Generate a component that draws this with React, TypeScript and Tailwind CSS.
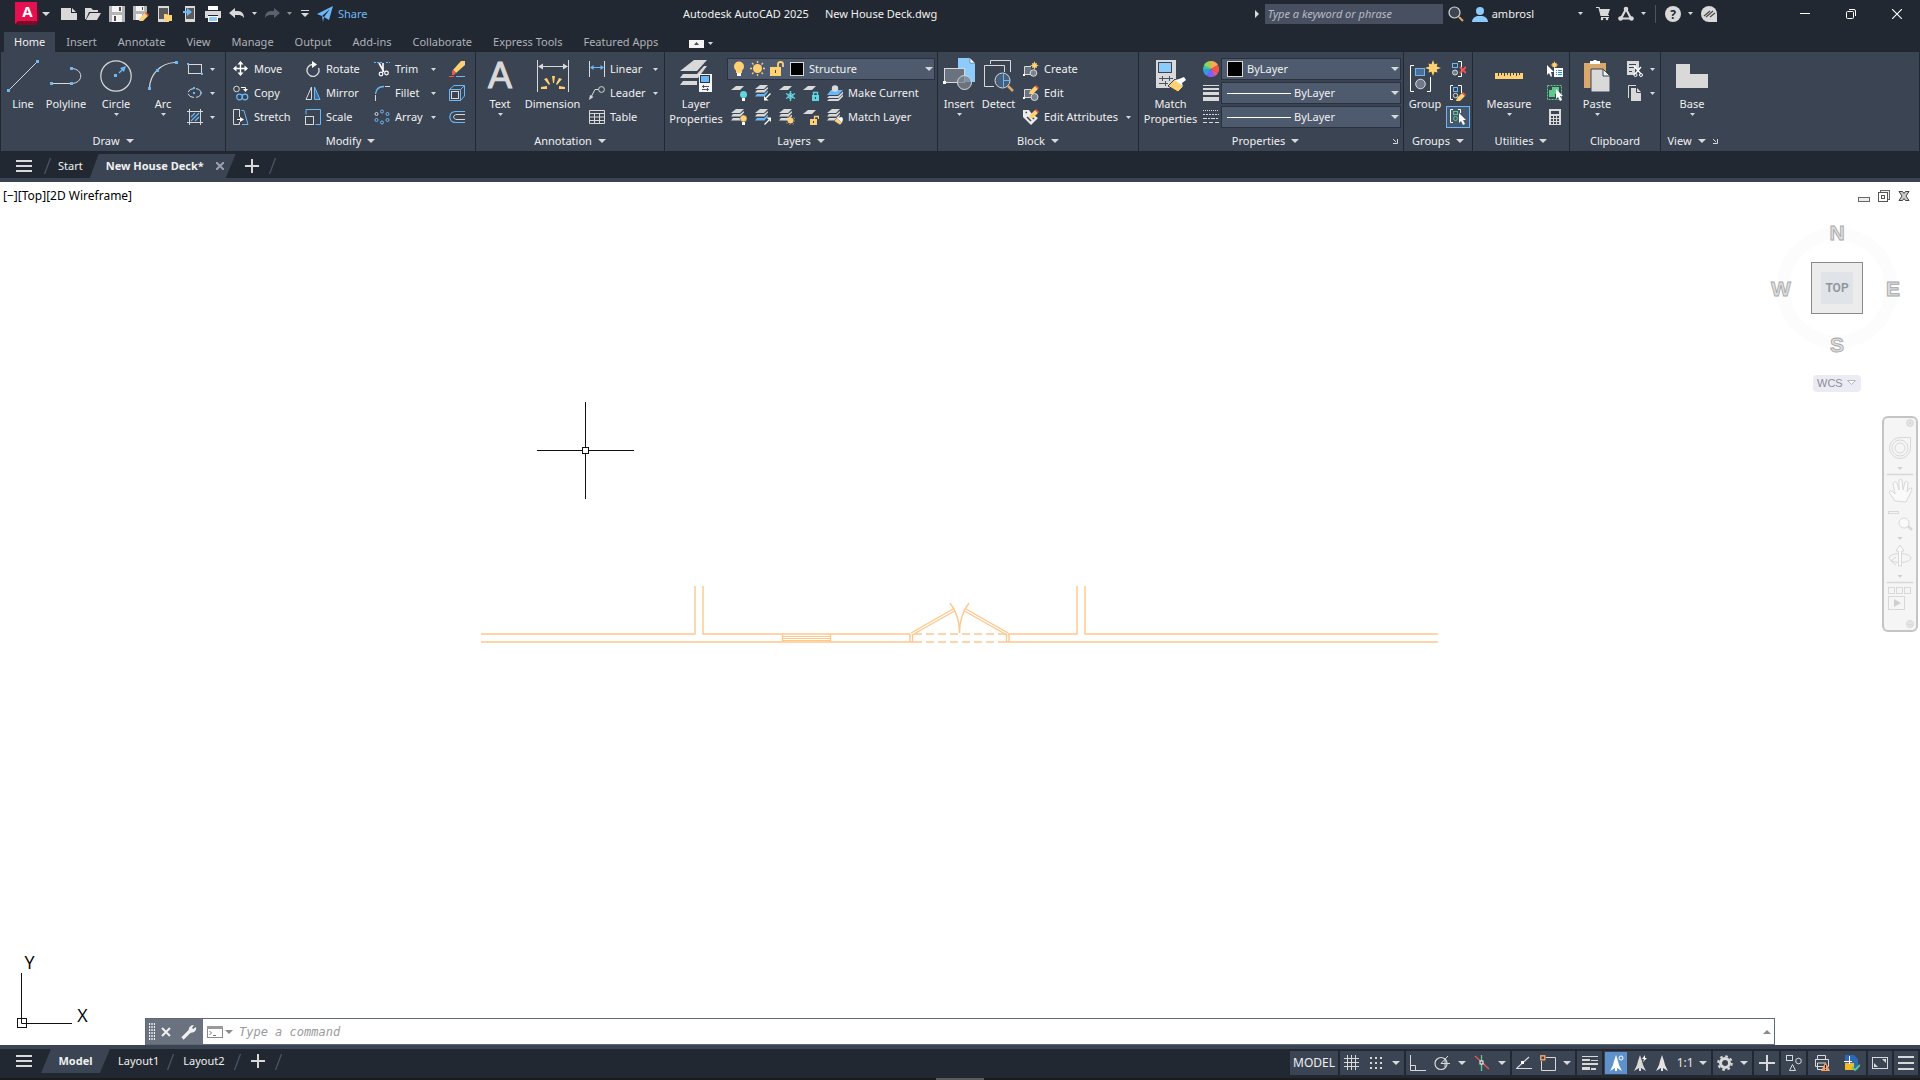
import React, { useState } from 'react';
import clsx from 'clsx';

const LIGHT = '#d9d9d9';
const BLUE = '#6cb8f6';
const YELLOW = '#ffd173';
const WOOD = '#d9a86c';
const TEAL = '#62d6e0';
const GREEN = '#5ec98a';
const RED = '#f25555';
const PANEL = '#3b4453';

type IconProps = { size?: number; w?: number; h?: number; className?: string; children: React.ReactNode };

function Svg({ size = 16, w, h, className, children }: IconProps) {
  const width = w ?? size;
  const height = h ?? size;
  return (
    <svg
      width={width}
      height={height}
      viewBox={`0 0 ${width} ${height}`}
      fill="none"
      className={clsx('shrink-0', className)}
      aria-hidden="true"
    >
      {children}
    </svg>
  );
}

function Caret({ size = 'sm', className }: { size?: 'sm' | 'md'; className?: string }) {
  const w = size === 'sm' ? 5 : 8;
  const h = size === 'sm' ? 3 : 4;
  return (
    <Svg w={w} h={h} className={className}>
      <path d={`M0 0H${w}L${w / 2} ${h}Z`} fill={LIGHT} />
    </Svg>
  );
}

/* ---------- shared icon parts ---------- */

const Dot = ({ x, y }: { x: number; y: number }) => <rect x={x} y={y} width="3" height="3" fill={BLUE} />;

const Pencil = ({ x, y }: { x: number; y: number }) => (
  <g transform={`translate(${x} ${y})`}>
    <path d="M0 9L1 6L6 1L9 4L4 9Z" fill={YELLOW} />
    <path d="M6 1L7 0L10 3L9 4Z" fill={RED} />
  </g>
);

const Star = ({ x, y, r }: { x: number; y: number; r: number }) => {
  const pts = Array.from({ length: 16 }, (_, i) => {
    const rad = i % 2 ? r * 0.5 : i % 4 ? r * 0.8 : r;
    const a = (i * Math.PI) / 8;
    return `${x + rad * Math.sin(a)},${y - rad * Math.cos(a)}`;
  });
  return <polygon points={pts.join(' ')} fill={YELLOW} />;
};

const Pointer = ({ x, y }: { x: number; y: number }) => (
  <path transform={`translate(${x} ${y})`} d="M0 0V10L2 8L4 12L6 11L4 7H7Z" fill="#ffffff" />
);

const Sheet = ({ y, fill = LIGHT }: { y: number; fill?: string }) => <path d={`M5 ${y}H13L9 ${y + 4}H0Z`} fill={fill} />;

const Sheets = ({ accent = LIGHT }: { accent?: string }) => (
  <>
    <Sheet y={0} />
    <path d="M2 5H9L13 2V3.500L9.500 7.500H0Z" fill={LIGHT} />
    <path d="M2 9H9L13 5.500V7L9.500 11.500H0Z" fill={accent} />
  </>
);

/* ---------- ribbon icons, 32px ---------- */

const big = {
  line: (
    <Svg size={32}>
      <path d="M2 30L30 2" stroke={LIGHT} />
      <Dot x={0} y={29} />
      <Dot x={29} y={0} />
    </Svg>
  ),
  polyline: (
    <Svg size={32}>
      <path d="M1 23.5H21M21 8.5C34 8.5 34 23.5 21 23.5" stroke={LIGHT} />
      <Dot x={0} y={22} />
      <Dot x={20} y={22} />
      <Dot x={20} y={7} />
    </Svg>
  ),
  circle: (
    <Svg size={32}>
      <circle cx="16" cy="16" r="15.2" stroke={LIGHT} strokeWidth="1.2" />
      <path d="M19 13L24 8" stroke={BLUE} strokeWidth="1.4" />
      <path d="M26 6L20 8L24 12Z" fill={BLUE} />
      <Dot x={14} y={14} />
    </Svg>
  ),
  arc: (
    <Svg size={32}>
      <path d="M2.500 28C3 14 14 3 28 2.500" stroke={LIGHT} strokeWidth="1.2" />
      <Dot x={1} y={27} />
      <Dot x={9} y={9} />
      <Dot x={28} y={1} />
    </Svg>
  ),
  text: (
    <Svg size={32} className="overflow-visible">
      <text x="16" y="28" textAnchor="middle" fontSize="36" fontFamily="Liberation Sans, Arial, sans-serif" fill={LIGHT} stroke={LIGHT}>A</text>
    </Svg>
  ),
  dimension: (
    <Svg size={32}>
      <path d="M.5 0V32M31.500 0V32M2 6.500H30" stroke={LIGHT} />
      <path d="M1 6.500L6 3.500V9.500ZM31 6.500L26 3.500V9.500Z" fill={LIGHT} />
      <path d="M15 16H18L17 23H16ZM7 19L10 18L13 24L12 25ZM25 19L22 18L19 24L20 25ZM4 27L10 26V29H4ZM28 27L22 26V29H28Z" fill={YELLOW} />
    </Svg>
  ),
  layerProps: (
    <Svg size={32}>
      <path d="M14 0H27L17 11H0Z" fill={LIGHT} />
      <path d="M3 14H17L24 6H27L18 18H0Z" fill={LIGHT} />
      <path d="M3 21H17V25H0Z" fill={LIGHT} />
      <rect x="19" y="14" width="13" height="18" fill="#f4f4f4" />
      <rect x="20.500" y="15.500" width="9" height="7" fill={BLUE} stroke="#2b3340" />
      <path d="M22 26.500H29M22 29.500H29M23.500 25V28M27.500 28V31" stroke="#4a5362" />
    </Svg>
  ),
  insert: (
    <Svg size={32} className="overflow-visible">
      <path d="M15 -2H27L32 3V22H15Z" fill="#8ccbfb" />
      <path d="M27 -2L32 3H27Z" fill="#fff" stroke={PANEL} strokeWidth=".5" />
      <rect x="1.500" y="8.500" width="20" height="14" fill="#6a7280" stroke={LIGHT} />
      <circle cx="21.500" cy="22.500" r="7" fill="#7b828f" fillOpacity=".75" stroke={LIGHT} />
      <rect x="0" y="21" width="3" height="3" fill="#fff" />
    </Svg>
  ),
  detect: (
    <Svg size={32}>
      <path d="M7.500 4V.5H27.500V12M1.500 26.500V5.500H21.500V12M1.500 26.500H11" stroke={LIGHT} />
      <circle cx="19.500" cy="20.500" r="7.500" fill="#46607c" stroke={LIGHT} />
      <path d="M20.500 13V28M20.500 20.500H27" stroke={BLUE} />
      <path d="M25 26L30 31" stroke={WOOD} strokeWidth="2.5" />
    </Svg>
  ),
  matchProps: (
    <Svg size={32}>
      <rect x="1" y="0" width="20" height="28" fill={LIGHT} />
      <rect x="3.500" y="2.500" width="13" height="10" fill="#8ccbfb" stroke="#3b4453" />
      <path d="M4 18.500H18M4 23.500H13M7.500 16V21M10.500 21V26M14.500 16V21" stroke="#4a5362" />
      <path d="M13 26L20 19L28 27L23 32Z" fill={YELLOW} stroke={PANEL} />
      <path d="M20 20L24 19L29 17L31 20L27 23L28 27Z" fill="#fff" />
    </Svg>
  ),
  group: (
    <Svg size={32}>
      <path d="M5 5.500H1.500V31.500H5M18 31.500H21.500V17" stroke="#fff" />
      <rect x="6.500" y="8.500" width="9" height="7" fill="#4c6f93" stroke={BLUE} />
      <circle cx="11.500" cy="24" r="4.800" fill="#70798a" stroke={LIGHT} />
      <Star x={24} y={8} r={8} />
    </Svg>
  ),
  measure: (
    <Svg size={32}>
      <rect x="2" y="13" width="28" height="6" fill={YELLOW} />
      <path d="M5.500 13V16M8.500 13V15M11.500 13V16M14.500 13V15M17.500 13V16M20.500 13V15M23.500 13V16M26.500 13V15" stroke={PANEL} />
    </Svg>
  ),
  paste: (
    <Svg size={32}>
      <rect x="3" y="3" width="22" height="25" fill={WOOD} />
      <path d="M9 1H12L13 0H15L16 1H19V4H9Z" fill="#fff" />
      <path d="M10 9H22L29 16V32H10Z" fill={LIGHT} stroke={PANEL} />
      <path d="M22 9L29 16H22Z" fill="#f4f4f4" stroke={PANEL} />
    </Svg>
  ),
  base: (
    <Svg size={32}>
      <path d="M0 4H14V14H32V28H0Z" fill={LIGHT} />
    </Svg>
  ),
};

/* ---------- ribbon icons, 16px ---------- */

const small = {
  rect: (
    <Svg>
      <rect x="1.500" y="3.500" width="13" height="9" stroke={LIGHT} />
      <rect width="2" height="2" y="2" fill={BLUE} />
      <rect width="2" height="2" x="14" y="12" fill={BLUE} />
    </Svg>
  ),
  ellipse: (
    <Svg>
      <ellipse cx="7.500" cy="8" rx="6.500" ry="4.500" stroke={LIGHT} strokeDasharray="7 2" />
      <rect x="6" y="2" width="2" height="2" fill={BLUE} />
      <rect x="6" y="7" width="2" height="2" fill={BLUE} />
      <rect x="13" y="7" width="2" height="2" fill={BLUE} />
    </Svg>
  ),
  hatch: (
    <Svg>
      <path d="M2.500 0V16M13.500 0V16M0 2.500H16M0 13.500H16" stroke={LIGHT} />
      <path d="M4 8L8 4M4 12L12 4M8 12L12 8" stroke={BLUE} strokeWidth="1.2" />
    </Svg>
  ),
  move: (
    <Svg>
      <path d="M7.500 1V14M1 7.500H14" stroke="#fff" strokeWidth="1.4" />
      <path d="M7.500 0L10.500 3.500H4.500ZM7.500 15L4.500 11.500H10.500ZM0 7.500L3.500 4.500V10.500ZM15 7.500L11.500 10.500V4.500Z" fill="#fff" />
    </Svg>
  ),
  rotate: (
    <Svg>
      <path d="M13.500 7A6 6 0 1 1 7 3.500" stroke={LIGHT} strokeWidth="1.4" />
      <path d="M7 0L12 3.500L7 7Z" fill="#fff" />
    </Svg>
  ),
  copy: (
    <Svg>
      <circle cx="3.500" cy="4" r="2.800" stroke={LIGHT} />
      <path d="M8 2.500H12.500V4" stroke="#fff" />
      <path d="M10 4H15L12.500 7Z" fill="#fff" />
      <circle cx="6.500" cy="12" r="2.800" stroke={BLUE} strokeWidth="1.2" />
      <circle cx="12" cy="12" r="2.800" stroke={BLUE} strokeWidth="1.2" />
    </Svg>
  ),
  mirror: (
    <Svg>
      <path d="M6.500 2V14.500H1Z" stroke={LIGHT} />
      <path d="M9.500 2V14.500H15Z" fill="#3f6b94" stroke={BLUE} />
    </Svg>
  ),
  stretch: (
    <Svg>
      <path d="M6.500 8V.5H.5V15.500H6.500V13" stroke={LIGHT} />
      <path d="M8.500 1.500H11L15 15.500H9" stroke={BLUE} />
      <path d="M4 10.500H8" stroke="#fff" />
      <path d="M7 8L11 10.500L7 13Z" fill="#fff" />
    </Svg>
  ),
  scale: (
    <Svg>
      <path d="M1 5.500V.5H15.500V15.500H10.500" stroke={BLUE} />
      <rect x=".5" y="7.500" width="8" height="8" stroke={LIGHT} />
    </Svg>
  ),
  trim: (
    <Svg>
      <path d="M0 1.500H9M12 1.500H16" stroke={BLUE} strokeDasharray="2 1" />
      <path d="M5 2L10 11M9 2V11" stroke="#fff" strokeWidth="1.6" />
      <circle cx="7" cy="13" r="1.800" stroke="#fff" strokeWidth="1.2" />
      <circle cx="12.500" cy="12" r="1.800" stroke="#fff" strokeWidth="1.2" />
    </Svg>
  ),
  fillet: (
    <Svg>
      <path d="M1.500 9C2 4 5 1.500 10 1.500" stroke={BLUE} strokeWidth="1.3" />
      <path d="M11 1.500H16M1.500 10V16" stroke={LIGHT} />
    </Svg>
  ),
  array: (
    <Svg>
      <circle cx="2.500" cy="5" r="1.500" stroke={LIGHT} />
      <circle cx="8" cy="2.500" r="1.500" stroke={BLUE} />
      <circle cx="13.500" cy="5" r="1.500" stroke={BLUE} />
      <circle cx="2.500" cy="11" r="1.500" stroke={BLUE} />
      <circle cx="8" cy="13.500" r="1.500" stroke={BLUE} />
      <circle cx="13.500" cy="11" r="1.500" stroke={BLUE} />
    </Svg>
  ),
  erase: (
    <Svg>
      <path d="M4 9L12 0H16V4L7 12Z" fill={YELLOW} />
      <path d="M3 10L4 9L7 12L5 14H3Z" fill={RED} />
      <path d="M0 15.500H5" stroke={RED} />
      <path d="M7 15.500H16" stroke={BLUE} />
    </Svg>
  ),
  explode: (
    <Svg>
      <path d="M.5 4.500L5 .5H15.500V11L11.500 15.500M15.500 .5L11.500 4.500" stroke={BLUE} />
      <path d="M.5 4.500H11.500V15.500H.5Z" stroke={BLUE} />
      <rect x="2.500" y="6.500" width="7" height="7" stroke={LIGHT} />
    </Svg>
  ),
  offset: (
    <Svg>
      <path d="M16 2.500H6.500C-1 2.500-1 13.500 6.500 13.500H16" stroke={BLUE} strokeWidth="1.2" />
      <path d="M16 5.500H8C3.500 5.500 3.500 10.500 8 10.500H16" stroke={LIGHT} />
    </Svg>
  ),
  linear: (
    <Svg>
      <path d="M.5 0V16M15.500 0V16" stroke={LIGHT} />
      <path d="M3 6.500H13" stroke={BLUE} />
      <path d="M1 6.500L4.500 4V9ZM15 6.500L11.500 4V9Z" fill={BLUE} />
    </Svg>
  ),
  leader: (
    <Svg>
      <circle cx="12.500" cy="4.500" r="2.900" stroke={LIGHT} />
      <path d="M9.500 4.500H6L1.500 13" stroke={LIGHT} />
      <path d="M0 15L1 10L4.500 12Z" fill={LIGHT} />
    </Svg>
  ),
  table: (
    <Svg>
      <path d="M.5 1.500H15.500V14.500H.5ZM.5 4.500H15.500M.5 8H15.500M.5 11.500H15.500M5.500 4.500V14.500M10.500 4.500V14.500" stroke={LIGHT} />
    </Svg>
  ),
  layOff: (
    <Svg>
      <Sheet y={1} />
      <circle cx="12.500" cy="9.500" r="3.500" fill={TEAL} />
      <rect x="11" y="13" width="3" height="3" fill="#fff" />
    </Svg>
  ),
  layIso: (
    <Svg>
      <Sheets accent={BLUE} />
      <path d="M15.500 8.500L11 13" stroke="#fff" strokeWidth="1.3" />
      <path d="M9 15.500V11L13.500 15.500Z" fill="#fff" />
    </Svg>
  ),
  layFreeze: (
    <Svg>
      <Sheet y={1} />
      <path d="M11.500 6V16M7 8.500L16 13.500M16 8.500L7 13.500" stroke={TEAL} strokeWidth="1.4" />
      <circle cx="11.500" cy="11" r="2.500" stroke={TEAL} />
    </Svg>
  ),
  layLock: (
    <Svg>
      <Sheet y={1} />
      <rect x="9" y="10" width="7" height="6" fill={TEAL} />
      <path d="M10.500 10V7.500H14.500V10" stroke={TEAL} strokeWidth="1.3" />
      <rect x="12" y="12" width="1" height="2" fill={PANEL} />
    </Svg>
  ),
  makeCurrent: (
    <Svg>
      <path d="M4 5H16L11 10H0Z" fill={BLUE} />
      <circle cx="8" cy="3.500" r="3.200" fill={LIGHT} />
      <path d="M2 11H11L16 6.500V8.500L11.500 13H0ZM2 14H11L16 9.500V11.500L11.500 16H0Z" fill={LIGHT} />
    </Svg>
  ),
  layOn: (
    <Svg>
      <Sheets />
      <circle cx="12.500" cy="9.500" r="3.500" fill={YELLOW} stroke={PANEL} strokeWidth=".5" />
      <rect x="11" y="13" width="3" height="3" fill="#fff" />
    </Svg>
  ),
  layUniso: (
    <Svg>
      <Sheets accent={BLUE} />
      <path d="M9.500 15.500L14 11" stroke="#fff" strokeWidth="1.3" />
      <path d="M16 8.500V13L11.500 8.500Z" fill="#fff" />
    </Svg>
  ),
  layThaw: (
    <Svg>
      <Sheets />
      <circle cx="11.500" cy="11.500" r="3" fill={YELLOW} />
      <circle cx="11.500" cy="11.500" r="4.500" stroke={YELLOW} strokeDasharray="1 2.5" />
    </Svg>
  ),
  layUnlock: (
    <Svg>
      <Sheet y={1} />
      <rect x="7" y="10" width="7" height="6" fill={YELLOW} />
      <path d="M11.500 10V7.500H15.500V10" stroke={YELLOW} strokeWidth="1.3" />
      <rect x="10" y="12" width="1" height="2" fill={PANEL} />
    </Svg>
  ),
  matchLayer: (
    <Svg>
      <Sheets />
      <path d="M7 12L10 9L15 14L13 16Z" fill={YELLOW} stroke={PANEL} strokeWidth=".5" />
      <path d="M10 9L15 8L16 10L15 14Z" fill="#fff" />
    </Svg>
  ),
  blockCreate: (
    <Svg>
      <path d="M8 5.500H1.500V13.500H9" stroke={LIGHT} fill="#6a7280" />
      <circle cx="10.500" cy="12" r="3.300" fill="#7b828f" stroke={LIGHT} />
      <rect x="0" y="13" width="2" height="2" fill="#fff" />
      <Star x={11.5} y={4.5} r={4.5} />
    </Svg>
  ),
  blockEdit: (
    <Svg>
      <path d="M8 4.500H1.500V12.500H9" stroke={LIGHT} fill="#6a7280" />
      <circle cx="11.500" cy="12" r="3.500" fill="#7b828f" stroke={LIGHT} />
      <rect x="0" y="12" width="2" height="2" fill="#fff" />
      <Pencil x={6} y={0} />
    </Svg>
  ),
  attributes: (
    <Svg>
      <path d="M0 1H6L9 5L15 9L8 16L0 8Z" fill="#ececec" />
      <path d="M2.500 3.500H4M4 8L8 12M9 8L11 10" stroke={PANEL} strokeWidth="1.5" />
      <Pencil x={6} y={0} />
    </Svg>
  ),
  colorWheel: (
    <Svg>
      <path d="M8 8V0A8 8 0 0 1 15 4Z" fill="#ffa94d" />
      <path d="M8 8L15 4A8 8 0 0 1 15 12Z" fill="#f0564a" />
      <path d="M8 8L15 12A8 8 0 0 1 11 15.500Z" fill="#ef5a78" />
      <path d="M8 8L12 15A8 8 0 0 1 4 15Z" fill="#8a5cf6" />
      <path d="M8 8L4 15A8 8 0 0 1 0 8Z" fill="#2f9be0" />
      <path d="M8 8L0 8A8 8 0 0 1 2 3Z" fill="#35c9a0" />
      <path d="M8 8L1 4A8 8 0 0 1 8 0Z" fill="#9ccf5a" />
    </Svg>
  ),
  lineweight: (
    <Svg>
      <path d="M0 0H16V1H0ZM0 3H16V5H0ZM0 7H16V10H0ZM0 12H16V16H0Z" fill={LIGHT} />
    </Svg>
  ),
  linetype: (
    <Svg>
      <path d="M0 1.500H16" stroke={LIGHT} strokeDasharray="1 1" />
      <path d="M0 5.500H16" stroke={LIGHT} strokeDasharray="2 1" />
      <path d="M0 9.500H16" stroke={LIGHT} strokeDasharray="4 1 2 1" />
      <path d="M0 13.500H16" stroke={LIGHT} strokeDasharray="4 2" />
    </Svg>
  ),
  ungroup: (
    <Svg>
      <path d="M8 .5H11.500V15.500H8" stroke="#fff" />
      <rect x="2.500" y="2.500" width="5" height="4" stroke={BLUE} />
      <circle cx="5" cy="11.500" r="2.500" fill="#70798a" stroke={LIGHT} />
      <path d="M10 6L16 12M16 6L10 12" stroke={RED} strokeWidth="1.8" />
    </Svg>
  ),
  groupEdit: (
    <Svg>
      <path d="M3 .5H.5V14.500H3M8 .5H11.500V8" stroke="#fff" />
      <rect x="3.500" y="2.500" width="4" height="4" stroke={BLUE} />
      <circle cx="5.500" cy="10.500" r="2.200" stroke={LIGHT} />
      <Pencil x={6} y={7} />
    </Svg>
  ),
  groupSelect: (
    <Svg>
      <path d="M3 .5H.5V13.500H3M8 .5H10.500V4" stroke="#fff" />
      <rect x="3.500" y="2.500" width="4" height="3" stroke={GREEN} />
      <circle cx="5.500" cy="9.500" r="2" stroke={GREEN} />
      <Pointer x={9} y={4} />
    </Svg>
  ),
  quickSelect: (
    <Svg>
      <path d="M0 4V14L2 12L4 16L5 15L4 11H7Z" fill="#fff" />
      <Star x={7.5} y={4} r={4} />
      <rect x="7" y="7" width="9" height="9" fill="#fff" />
      <path d="M9 9.500H10M11 9.500H15M9 11.500H10M11 11.500H15M9 13.500H10M11 13.500H15" stroke="#2c8be0" />
    </Svg>
  ),
  selectAll: (
    <Svg>
      <rect x=".5" y=".5" width="14" height="14" stroke={GREEN} strokeDasharray="2 1" />
      <path d="M5 2H12V9H8V12H2V5H5Z" fill={GREEN} />
      <Pointer x={9} y={4} />
    </Svg>
  ),
  calc: (
    <Svg>
      <rect x="2" y="0" width="12" height="16" fill={LIGHT} />
      <path d="M4 2H12V5H4ZM4 7H6V9H4ZM7 7H9V9H7ZM10 7H12V9H10ZM4 10H6V12H4ZM7 10H9V12H7ZM10 10H12V12H10ZM4 13H6V15H4ZM7 13H9V15H7ZM10 13H12V15H10Z" fill={PANEL} />
    </Svg>
  ),
  cut: (
    <Svg>
      <path d="M0 0H12V8H8V14H0Z" fill={LIGHT} />
      <path d="M2 3.500H9M2 6.500H7M2 10.500H5" stroke={PANEL} />
      <path d="M7 5L14 13M14 6L8 13" stroke="#fff" strokeWidth="1.4" />
      <circle cx="8.500" cy="14" r="1.500" stroke="#fff" />
      <circle cx="14" cy="14" r="1.500" stroke="#fff" />
    </Svg>
  ),
  copyClip: (
    <Svg>
      <path d="M1.500 13V.5H9" stroke={LIGHT} />
      <path d="M4 3H10L14 7V16H4Z" fill={LIGHT} />
      <path d="M9.500 3V7.500H14" stroke={PANEL} />
    </Svg>
  ),
};

/* ---------- ribbon building blocks ---------- */

function BigButton({ icon, lines, menu, className }: { icon: React.ReactNode; lines: string[]; menu?: boolean; className: string }) {
  return (
    <button className={clsx('flex h-full flex-col items-center pt-2', className)}>
      {icon}
      <span className="mt-1 leading-[15px] whitespace-nowrap">
        {lines.map((l) => (
          <span key={l} className="block text-center">{l}</span>
        ))}
      </span>
      {menu && <Caret className="mt-[2px]" />}
    </button>
  );
}

type Row = { icon: React.ReactNode; label?: string; menu?: boolean; name?: string };

function SmallColumn({ rows, className }: { rows: Row[]; className?: string }) {
  return (
    <div className={clsx('flex flex-col pt-[5px]', className)}>
      {rows.map((r) => (
        <button key={r.label ?? r.name} aria-label={r.label ?? r.name} className="flex h-6 items-center">
          {r.icon}
          {r.label && <span className="ml-[5px] whitespace-nowrap">{r.label}</span>}
          {r.menu && <Caret className={clsx(r.label ? 'mr-1 ml-auto' : 'ml-[7px]')} />}
        </button>
      ))}
    </div>
  );
}

function Panel({ title, menu = true, launcher, className, children }: {
  title: string;
  menu?: boolean;
  launcher?: boolean;
  className: string;
  children: React.ReactNode;
}) {
  return (
    <section aria-label={title} className={clsx('flex shrink-0 flex-col border-r border-[#222831] bg-[#3b4453]', className)}>
      <div className="flex h-[78px]">{children}</div>
      <div className="flex h-[21px] items-center">
        <button className="flex flex-1 items-center justify-center gap-[6px]">
          {title}
          {menu && <Caret size="md" />}
        </button>
        {launcher && (
          <button aria-label={`${title} settings`} className="mr-[5px]">
            <Svg size={6}>
              <path d="M1 1L4 4M5.500 1V5.500H1" stroke={LIGHT} />
            </Svg>
          </button>
        )}
      </div>
    </section>
  );
}

function Combo({ label, value, children }: { label: string; value: string; children?: React.ReactNode }) {
  return (
    <label className="flex h-[22px] items-center border border-[#2a313c] bg-[#4e5b6f]">
      {children}
      <select aria-label={label} className="min-w-0 flex-1 appearance-none bg-transparent text-[11px] leading-4 text-[#f0f0f0] outline-none">
        <option>{value}</option>
      </select>
      <Caret size="md" className="mr-px" />
    </label>
  );
}

function TitleBar() {
  return (
    <header className="flex h-8 items-center pb-[5px] text-[#f0f0f0]">
      <div className="flex w-[683px] shrink-0 items-center">
        <button aria-label="Application menu" className="ml-[15px] flex items-center gap-[2px]">
          <Svg w={25} h={23}>
            <path d="M0 21L3 18H21L24 3V19L21 23H3Z" fill="#7d0a2b" />
            <path d="M0 0H22V19H3L0 22Z" fill="#e51050" />
            <text x="12.500" y="15" textAnchor="middle" fontSize="15" fontWeight="700" fontFamily="Noto Sans, sans-serif" fill="#fff">A</text>
          </Svg>
          <Caret size="md" />
        </button>
        <div className="ml-[11px] flex items-center gap-2">
          <button aria-label="New">
            <Svg><path d="M0 2H10V7H16V14H0Z" fill={LIGHT} /><path d="M11 2L15 6H11Z" fill={LIGHT} /></Svg>
          </button>
          <button aria-label="Open">
            <Svg><path d="M0 2H6L8 4H13V6H4L1 13H0Z" fill={LIGHT} /><path d="M5 7H16L12 14H1Z" fill={LIGHT} /></Svg>
          </button>
          <button aria-label="Save">
            <Svg><path d="M0 0H16V16H0Z" fill="#b5b5b5" /><path d="M3 0H13V6H3ZM3 9H13V16H3Z" fill="#f4f4f4" /><path d="M10 1H12V5H10ZM5 10H7V15H5Z" fill="#4a4a4a" /></Svg>
          </button>
          <button aria-label="Save As">
            <Svg><path d="M0 0H14V6L7 14H0Z" fill="#b5b5b5" /><path d="M3 0H11V5H3ZM3 8H9V14H3Z" fill="#f4f4f4" /><path d="M9 1H10V4H9Z" fill="#4a4a4a" /><Pencil x={6} y={6} /></Svg>
          </button>
          <button aria-label="Open from Web and Mobile">
            <Svg><path d="M1 0H12V16H1Z" fill={LIGHT} /><path d="M2 2H11V13H2Z" fill="#5a5a5a" /><path d="M7 8H10L11 9H15V15H7Z" fill={YELLOW} /></Svg>
          </button>
          <button aria-label="Save to Web and Mobile">
            <Svg><path d="M4 0H14V16H4Z" fill={LIGHT} /><path d="M5 2H13V13H5Z" fill="#5a5a5a" /><path d="M2 5H6V2L11 6L6 10V7H2Z" fill={BLUE} /></Svg>
          </button>
          <button aria-label="Plot">
            <Svg><path d="M3 0H13V4H3Z" fill="#fff" /><path d="M0 5H16V12H13V9H3V12H0Z" fill={LIGHT} /><path d="M3 10H13V16H3Z" fill="#fff" /><path d="M4 11H12V15H4Z" fill="#8ccbfb" /></Svg>
          </button>
        </div>
        <button aria-label="Undo" className="ml-2">
          <Svg><path d="M0 7L6 2V5H9C13 5 15 8 15 12C13 9 11 9 9 9H6V12Z" fill={LIGHT} /></Svg>
        </button>
        <Caret className="ml-[7px]" />
        <button aria-label="Redo" className="ml-[7px]">
          <Svg><path d="M16 7L10 2V5H7C3 5 1 8 1 12C3 9 5 9 7 9H10V12Z" fill="#5a6270" /></Svg>
        </button>
        <Caret className="ml-[7px] opacity-60" />
        <button aria-label="Customize toolbar" className="ml-[9px]">
          <Svg w={8} h={8}><path d="M0 .5H8" stroke={LIGHT} /><path d="M0 3H8L4 7Z" fill={LIGHT} /></Svg>
        </button>
        <button className="ml-2 flex items-center gap-[5px] text-[#6cb8f6]">
          <Svg>
            <path d="M0 8L16 0L12 14L7 11L13 3L5 10Z" fill={BLUE} />
            <path d="M5 10L7 11L6 16Z" fill={BLUE} />
          </Svg>
          Share
        </button>
      </div>

      <h1 className="flex gap-4 whitespace-nowrap">
        <span>Autodesk AutoCAD 2025</span>
        <span>New House Deck.dwg</span>
      </h1>

      <div className="flex flex-1 items-center justify-end">
        <Svg w={4} h={8} className="mr-[6px]"><path d="M0 0V8L4 4Z" fill={LIGHT} /></Svg>
        <input
          aria-label="Search"
          placeholder="Type a keyword or phrase"
          className="mr-px h-5 w-[178px] shrink-0 bg-[#474f61] px-[3px] text-[11px] italic placeholder:text-[#b9bcc4]"
        />
        <button aria-label="Run search" className="mx-1">
          <Svg><circle cx="6.500" cy="6.500" r="5.500" fill="#3d4654" stroke={LIGHT} strokeWidth="1.2" /><path d="M11 11L15 15" stroke={WOOD} strokeWidth="2" /></Svg>
        </button>
        <button className="ml-1 flex items-center gap-1">
          <Svg><circle cx="8" cy="5" r="4" fill="#8ccbfb" /><path d="M0 16C0 12 4 10 6 10H10C12 10 16 12 16 16Z" fill="#8ccbfb" /></Svg>
          ambrosl
        </button>
        <Caret className="ml-11" />
        <button aria-label="App Store" className="ml-3">
          <Svg><path d="M1 1.500H4L6 9.500H14" stroke={LIGHT} strokeWidth="1.2" /><path d="M4.500 3H15L13 9H6Z" fill={LIGHT} /><circle cx="7" cy="13" r="1.300" fill={LIGHT} /><circle cx="12" cy="13" r="1.300" fill={LIGHT} /><path d="M6 11.500H14" stroke={LIGHT} /></Svg>
        </button>
        <button aria-label="Autodesk account" className="ml-[7px] flex items-center gap-[7px]">
          <Svg><path d="M8 3L3 12.500H13Z" stroke={LIGHT} strokeWidth="2.2" /><circle cx="8" cy="3" r="2.300" fill={LIGHT} /><circle cx="2.500" cy="12.500" r="2.300" fill={LIGHT} /><circle cx="13.500" cy="12.500" r="2.300" fill={LIGHT} /></Svg>
          <Caret />
        </button>
        <span className="mx-[9px] h-[18px] w-px bg-[#4a5464]" />
        <button aria-label="Help" className="flex items-center gap-[7px]">
          <Svg>
            <circle cx="8" cy="8" r="8" fill={LIGHT} />
            <text x="8" y="12.500" textAnchor="middle" fontSize="12" fontWeight="700" fontFamily="Noto Sans, sans-serif" fill="#222831">?</text>
          </Svg>
          <Caret />
        </button>
        <button aria-label="Feedback" className="ml-2">
          <Svg><path d="M8 0A8 8 0 0 0 0 8A8 8 0 0 0 8 16H16V8A8 8 0 0 0 8 0Z" fill={LIGHT} /><path d="M3 10L9 5M5 11L12 5M9 11L14 7" stroke="#4a4a4a" strokeWidth="1.2" /></Svg>
        </button>
        <button aria-label="Minimize" className="ml-[83px] pr-9">
          <Svg size={10}><path d="M0 4.500H10" stroke="#fff" /></Svg>
        </button>
        <button aria-label="Restore" className="pr-9">
          <Svg size={10}><rect x=".5" y="2.500" width="7" height="7" rx="1" stroke="#fff" /><path d="M3 .5H8Q9.500 .5 9.500 2V7" stroke="#fff" /></Svg>
        </button>
        <button aria-label="Close" className="pr-[18px]">
          <Svg size={10}><path d="M0 0L10 10M10 0L0 10" stroke="#fff" strokeWidth="1.1" /></Svg>
        </button>
      </div>
    </header>
  );
}

const TABS = ['Home', 'Insert', 'Annotate', 'View', 'Manage', 'Output', 'Add-ins', 'Collaborate', 'Express Tools', 'Featured Apps'];

function RibbonTabs({ tab, onSelect }: { tab: string; onSelect: (t: string) => void }) {
  return (
    <nav className="flex h-5 items-stretch gap-px pl-1">
      {TABS.map((t) => (
        <button
          key={t}
          onClick={() => onSelect(t)}
          className={clsx('px-[10px]', t === tab ? 'bg-[#3b4453] text-[#f0f0f0]' : 'text-[#aeb2b9]')}
        >
          {t}
        </button>
      ))}
      <button aria-label="Minimize ribbon" className="ml-[20px] flex items-center gap-1 pt-[3px]">
        <Svg w={15} h={8}><path d="M0 0H15V8H0Z" fill="#f4f4f4" /><path d="M5 5H10L7.500 2Z" fill="#4a4a4a" /></Svg>
        <Caret />
      </button>
    </nav>
  );
}

function Ribbon() {
  return (
    <div className="mx-px flex h-[99px] bg-[#3b4453] text-[#f0f0f0]">
      <Panel title="Draw" className="w-[225px]">
        <BigButton icon={big.line} lines={['Line']} className="w-[44px]" />
        <BigButton icon={big.polyline} lines={['Polyline']} className="w-[42px]" />
        <BigButton icon={big.circle} lines={['Circle']} menu className="w-[58px]" />
        <BigButton icon={big.arc} lines={['Arc']} menu className="w-[36px]" />
        <SmallColumn
          className="ml-[6px]"
          rows={[
            { icon: small.rect, name: 'Rectangle', menu: true },
            { icon: small.ellipse, name: 'Ellipse', menu: true },
            { icon: small.hatch, name: 'Hatch', menu: true },
          ]}
        />
      </Panel>

      <Panel title="Modify" className="w-[250px]">
        <SmallColumn className="ml-[7px] w-[72px]" rows={[{ icon: small.move, label: 'Move' }, { icon: small.copy, label: 'Copy' }, { icon: small.stretch, label: 'Stretch' }]} />
        <SmallColumn className="w-[69px]" rows={[{ icon: small.rotate, label: 'Rotate' }, { icon: small.mirror, label: 'Mirror' }, { icon: small.scale, label: 'Scale' }]} />
        <SmallColumn
          className="w-[66px]"
          rows={[{ icon: small.trim, label: 'Trim', menu: true }, { icon: small.fillet, label: 'Fillet', menu: true }, { icon: small.array, label: 'Array', menu: true }]}
        />
        <SmallColumn className="ml-[9px]" rows={[{ icon: small.erase, name: 'Erase' }, { icon: small.explode, name: 'Explode' }, { icon: small.offset, name: 'Offset' }]} />
      </Panel>

      <Panel title="Annotation" className="w-[189px]">
        <BigButton icon={big.text} lines={['Text']} menu className="w-[48px]" />
        <BigButton icon={big.dimension} lines={['Dimension']} className="w-[57px]" />
        <SmallColumn
          className="ml-[8px] w-[73px]"
          rows={[{ icon: small.linear, label: 'Linear', menu: true }, { icon: small.leader, label: 'Leader', menu: true }, { icon: small.table, label: 'Table' }]}
        />
      </Panel>

      <Panel title="Layers" className="w-[273px]">
        <BigButton icon={big.layerProps} lines={['Layer', 'Properties']} className="w-[62px]" />
        <div className="flex w-[208px] flex-col pt-[6px]">
          <Combo label="Layer" value="Structure">
            <Svg w={76} h={16} className="ml-[5px]">
              <circle cx="6" cy="5.500" r="5" fill={YELLOW} />
              <path d="M3 9H9V12H3Z" fill={YELLOW} />
              <path d="M4 12H8V15H4Z" fill="#fff" />
              <circle cx="24.500" cy="7.500" r="4.500" fill={YELLOW} />
              <path d="M24.500 0V2M24.500 13V15M17 7.500H19M30 7.500H32M19 2L20.500 3.500M30 2L28.500 3.500M19 13L20.500 11.500M30 13L28.500 11.500" stroke={YELLOW} strokeWidth="1.3" />
              <rect x="37" y="6" width="11" height="9" fill={YELLOW} />
              <path d="M45 6V3Q45 1 47.500 1Q50 1 50 3V6" stroke={YELLOW} strokeWidth="1.8" />
              <rect x="42" y="9" width="1" height="3" fill={PANEL} />
              <rect x="57.500" y="1.500" width="13" height="13" fill="#000" stroke={LIGHT} />
            </Svg>
          </Combo>
          <div className="mt-px ml-1 grid grid-cols-[repeat(4,24px)_auto]">
            {[
              [small.layOff, small.layIso, small.layFreeze, small.layLock],
              [small.layOn, small.layUniso, small.layThaw, small.layUnlock],
            ].map((icons, r) => (
              <React.Fragment key={r}>
                {icons.map((icon, i) => (
                  <button key={i} aria-label={`Layer tool ${r * 4 + i + 1}`} className="flex h-6 items-center">{icon}</button>
                ))}
                <button className="flex h-6 items-center gap-[5px] whitespace-nowrap">
                  {r === 0 ? small.makeCurrent : small.matchLayer}
                  {r === 0 ? 'Make Current' : 'Match Layer'}
                </button>
              </React.Fragment>
            ))}
          </div>
        </div>
      </Panel>

      <Panel title="Block" className="w-[201px]">
        <BigButton icon={big.insert} lines={['Insert']} menu className="w-[42px]" />
        <BigButton icon={big.detect} lines={['Detect']} className="w-[37px]" />
        <SmallColumn
          className="ml-[6px] w-[112px]"
          rows={[{ icon: small.blockCreate, label: 'Create' }, { icon: small.blockEdit, label: 'Edit' }, { icon: small.attributes, label: 'Edit Attributes', menu: true }]}
        />
      </Panel>

      <Panel title="Properties" launcher className="w-[265px]">
        <BigButton icon={big.matchProps} lines={['Match', 'Properties']} className="w-[63px]" />
        <div className="mr-[2px] ml-px flex flex-col pt-[5px]">
          <span className="flex h-6 items-center">{small.colorWheel}</span>
          <span className="flex h-6 items-center">{small.lineweight}</span>
          <span className="flex h-6 items-center">{small.linetype}</span>
        </div>
        <div className="flex w-[180px] flex-col gap-[2px] pt-[6px]">
          <Combo label="Object color" value="ByLayer">
            <span className="mr-1 ml-[5px] h-4 w-4 border border-[#d9d9d9] bg-black" />
          </Combo>
          <Combo label="Lineweight" value="ByLayer">
            <span className="mr-[3px] ml-[5px] h-px w-16 bg-white" />
          </Combo>
          <Combo label="Linetype" value="ByLayer">
            <span className="mr-[3px] ml-[5px] h-px w-16 bg-white" />
          </Combo>
        </div>
      </Panel>

      <Panel title="Groups" className="w-[69px]">
        <BigButton icon={big.group} lines={['Group']} className="w-[42px]" />
        <div className="flex flex-col pt-[5px]">
          <button aria-label="Ungroup" className="flex h-6 w-6 items-center justify-center">{small.ungroup}</button>
          <button aria-label="Group Edit" className="flex h-6 w-6 items-center justify-center">{small.groupEdit}</button>
          <button aria-label="Group Selection" className="mt-px flex h-[22px] w-6 items-center justify-center border border-[#6cb8f6] bg-[#46586f]">
            {small.groupSelect}
          </button>
        </div>
      </Panel>

      <Panel title="Utilities" className="w-[97px]">
        <BigButton icon={big.measure} lines={['Measure']} menu className="w-[72px]" />
        <SmallColumn className="ml-[2px]" rows={[{ icon: small.quickSelect, name: 'Quick Select' }, { icon: small.selectAll, name: 'Select All' }, { icon: small.calc, name: 'Quick Calculator' }]} />
      </Panel>

      <Panel title="Clipboard" menu={false} className="w-[91px]">
        <BigButton icon={big.paste} lines={['Paste']} menu className="w-[54px]" />
        <SmallColumn className="ml-[3px]" rows={[{ icon: small.cut, name: 'Cut', menu: true }, { icon: small.copyClip, name: 'Copy Clip', menu: true }]} />
      </Panel>

      <Panel title="View" launcher className="w-[62px] border-r-0">
        <BigButton icon={big.base} lines={['Base']} menu className="w-[62px]" />
      </Panel>
    </div>
  );
}

function Hamburger() {
  return (
    <Svg w={16} h={12}><path d="M0 0H16V2H0ZM0 5H16V7H0ZM0 10H16V12H0Z" fill={LIGHT} /></Svg>
  );
}

function Slash() {
  return <Svg w={7} h={16}><path d="M.5 16L6.500 0" stroke="#4a5464" strokeWidth="1.3" /></Svg>;
}

function Plus() {
  return <Svg size={14}><path d="M6 0H8V6H14V8H8V14H6V8H0V6H6Z" fill={LIGHT} /></Svg>;
}

function FileTabs() {
  return (
    <div className="flex h-[31px] items-stretch border-b-4 border-[#3b4453] pt-[3px] text-[#f0f0f0]">
      <button aria-label="File tab menu" className="flex w-11 items-center pl-4"><Hamburger /></button>
      <span className="flex items-center"><Slash /></span>
      <button className="px-[7px]">Start</button>
      <div className="flex w-[146px] items-center bg-[#3b4453] pl-4 [clip-path:polygon(9px_0,100%_0,calc(100%_-_10px)_100%,0_100%)]">
        <button className="font-bold">New House Deck*</button>
        <button aria-label="Close tab" className="mr-3 ml-auto">
          <Svg size={8}><path d="M0 0L8 8M8 0L0 8" stroke="#9ca2ad" strokeWidth="2" /></Svg>
        </button>
      </div>
      <button aria-label="New tab" className="mr-[10px] ml-[9px]"><Plus /></button>
      <span className="flex items-center"><Slash /></span>
    </div>
  );
}

/* House plan: walls, window and the double deck door */
function Drawing() {
  return (
    <svg className="absolute inset-0 h-full w-full" aria-label="Deck plan">
      <g stroke="#ffc78c" strokeWidth="1.4" fill="none">
        <path d="M481 452H695V404M703 404V452H910M481 460H914M1008 452H1077V404M1085 404V452H1438M1006 460H1438" />
        <path d="M782.500 452V460M830.500 452V460" />
        <path d="M782 454.500H831M782 456.500H831M782 458.500H831" strokeWidth="1" />
        <path d="M910 452V460M912.500 452V460M1006.500 452V460M1009 452V460" />
        <path d="M914 452H1006M914 460H1006" strokeDasharray="8 4" />
        <path d="M911 451L953 427M913 452.500L954.500 429M1008 451L966 427M1006 452.500L964.500 429" />
        <path d="M950 421C957 430 959.500 439 959.500 451C959.500 439 962 430 969 421" />
      </g>
      <g stroke="#111" fill="none">
        <path d="M585.500 220V265M585.500 272V317M537 268.500H582M589 268.500H634" />
        <rect x="582.500" y="265.500" width="6" height="6" />
      </g>
    </svg>
  );
}

function ViewCube() {
  return (
    <svg width="140" height="180" viewBox="0 0 140 180" className="absolute top-[38px] right-[10px]" aria-label="View cube">
      <circle cx="67" cy="68" r="54" stroke="#fcfcfc" strokeWidth="13" fill="none" />
      <g fontFamily="Liberation Sans, Arial, sans-serif" fontSize="21" fontWeight="700" textAnchor="middle" fill="#dfdfdf" stroke="#a8a8a8" strokeWidth=".9">
        <text x="67" y="20">N</text>
        <text x="67" y="132">S</text>
        <text x="11" y="76">W</text>
        <text x="123" y="76">E</text>
      </g>
      <rect x="41.500" y="42.500" width="51" height="51" fill="#ececec" stroke="#8a8a8a" />
      <rect x="51" y="52" width="32" height="32" fill="#e0e4e8" />
      <text x="67" y="72" textAnchor="middle" fontFamily="Roboto, sans-serif" fontSize="12" fontWeight="600" fill="#8f9498">TOP</text>
      <rect x="43" y="155" width="48" height="17" rx="4" fill="#ebebf6" />
      <text x="47" y="167" fontFamily="Liberation Sans, Arial, sans-serif" fontSize="11" fill="#8b8b94">WCS</text>
      <path d="M77.500 160.500H85.500L81.500 164.500Z" stroke="#b5b5bd" fill="#fff" />
    </svg>
  );
}

function NavBar() {
  return (
    <svg width="36" height="216" viewBox="0 0 36 216" className="absolute top-[234px] right-[2px]" aria-label="Navigation bar">
      <rect x="1" y="1" width="34" height="214" rx="5" fill="#f5f5f5" stroke="#c4c4c4" strokeWidth="2" />
      <g stroke="#d8d8d8" fill="none">
        <circle cx="28" cy="7" r="3.500" fill="#e6e6e6" />
        <path d="M26.500 5.500L29.500 8.500M29.500 5.500L26.500 8.500" />
        <path d="M18 21.500H28.500V32A10.500 10.500 0 1 1 18 21.500Z" />
        <circle cx="18" cy="32" r="8" />
        <circle cx="18" cy="32" r="5" />
        <path d="M5 58.500H31M5 166.500H31" strokeWidth="1.3" />
        <path d="M13 85L7 76Q8 73 11 76L13 78L11 67Q13 64 15 67L17 74V64Q19 62 20 64L21 74L23 66Q25 64 26 67L25 76L28 72Q30 71 30 74L26 82L24 86Z" fill="#fafafa" />
        <rect x="6.500" y="95.500" width="10" height="2" />
        <circle cx="22" cy="107" r="5" fill="#fafafa" />
        <path d="M26 110L30 114" strokeWidth="2.5" />
        <ellipse cx="18" cy="142" rx="11" ry="4.500" />
        <path d="M16.500 150V135H14L18 129L22 135H19.500V150Z" fill="#fafafa" />
        <path d="M14 141L9 145L14 149" />
        <rect x="6.500" y="171.500" width="6" height="6" />
        <rect x="14.500" y="171.500" width="6" height="6" />
        <rect x="22.500" y="171.500" width="6" height="6" />
        <rect x="6.500" y="180.500" width="16" height="13" />
        <circle cx="28" cy="208" r="3.500" fill="#e6e6e6" />
        <path d="M26 208.500H30" />
      </g>
      <path d="M15.500 51H20.500L18 54ZM15.500 121H20.500L18 124ZM15.500 159H20.500L18 162ZM12 183V191L19 187Z" fill="#cfcfcf" />
    </svg>
  );
}

function UcsIcon() {
  return (
    <svg width="100" height="90" viewBox="0 0 100 90" className="absolute bottom-3 left-0" aria-label="UCS icon">
      <g stroke="#111" fill="none">
        <path d="M21.500 30V80.500H72" />
        <rect x="17.500" y="75.500" width="9" height="9" />
      </g>
      <g fontFamily="Open Sans, sans-serif" fontSize="18" textAnchor="middle" fill="#000">
        <text x="29.500" y="26">Y</text>
        <text x="82.500" y="79">X</text>
      </g>
    </svg>
  );
}

function CommandLine() {
  return (
    <form className="mr-[145px] ml-[145px] flex h-[27px] items-stretch border border-[#5f6877] bg-white" onSubmit={(e) => e.preventDefault()}>
      <div className="flex w-[57px] items-center bg-[#6a717f]">
        <Svg w={6} h={18} className="ml-[3px]">
          <path d="M.5 0V18M3 0V18M5.500 0V18" stroke="#f0f0f0" strokeWidth="1.3" strokeDasharray="2 1" />
        </Svg>
        <button type="button" aria-label="Close command line" className="ml-[6px]">
          <Svg size={10}><path d="M1 1L9 9M9 1L1 9" stroke="#f0f0f0" strokeWidth="2" /></Svg>
        </button>
        <button type="button" aria-label="Customize" className="ml-[10px]">
          <Svg size={16}><path d="M1.500 14.500L9 7" stroke="#f0f0f0" strokeWidth="3.2" /><path d="M8 8C7 4 9 1 13 1L11 4L12 5L15 3C16 7 12 10 8 8Z" fill="#f0f0f0" /></Svg>
        </button>
      </div>
      <button type="button" aria-label="Recent commands" className="ml-1 flex items-center gap-[2px]">
        <Svg w={16} h={12}><rect x=".5" y=".5" width="15" height="11" stroke="#8a8a8a" /><path d="M0 0H16V3H0Z" fill="#9a9a9a" /><path d="M2.500 5L4.500 7L2.500 9M6 9.500H9" stroke="#777" /></Svg>
        <Svg w={8} h={4}><path d="M0 0H8L4 4Z" fill="#8a8a8a" /></Svg>
      </button>
      <input
        aria-label="Command"
        placeholder="Type a command"
        className="ml-[6px] min-w-0 flex-1 font-['DejaVu_Sans_Mono',monospace] text-[12px] italic outline-none placeholder:text-[#9a9a9a]"
      />
      <button type="button" aria-label="Command history" className="mr-[3px]">
        <Svg w={8} h={4}><path d="M0 4H8L4 0Z" fill="#8a8a8a" /></Svg>
      </button>
    </form>
  );
}

function Viewport() {
  return (
    <main className="relative flex flex-1 flex-col bg-white">
      <Drawing />
      <div className="relative flex justify-between pt-[6px] pr-[10px] pl-[3px] text-black">
        <button className="text-xs">[−][Top][2D Wireframe]</button>
        <div className="flex items-center gap-2">
          <button aria-label="Minimize drawing"><Svg size={12}><rect x=".5" y="7.500" width="11" height="4" fill="#eee" stroke="#666" /></Svg></button>
          <button aria-label="Restore drawing">
            <Svg size={12}><rect x="2.500" y=".5" width="9" height="9" fill="#eee" stroke="#666" /><rect x=".5" y="2.500" width="9" height="9" fill="#fff" stroke="#555" /><rect x="3.500" y="5.500" width="3" height="3" stroke="#555" /></Svg>
          </button>
          <button aria-label="Close drawing">
            <Svg size={12}><path d="M1 1.500H4.500L6 3.500L7.500 1.500H11L8 6L11 10.500H7.500L6 8.500L4.500 10.500H1L4 6Z" fill="#ccc" stroke="#444" /></Svg>
          </button>
        </div>
      </div>
      <ViewCube />
      <NavBar />
      <UcsIcon />
      <div className="relative mt-auto"><CommandLine /></div>
    </main>
  );
}

function Cell({ children, className }: { children: React.ReactNode; className?: string }) {
  return <div className={clsx('flex h-6 shrink-0 items-center bg-[#3b4453]', className)}>{children}</div>;
}

const compass = <path d="M8 0L10 6L11 10L14 16L9 13V16H7V13L2 16L5 10L6 6Z" fill="currentColor" />;

function StatusBar() {
  return (
    <footer className="flex h-[29px] items-start bg-[#222831] text-[#f0f0f0]">
      <button aria-label="Layout menu" className="mt-[6px] ml-4"><Hamburger /></button>
      <button className="ml-[9px] h-6 w-[69px] bg-[#3b4453] font-bold [clip-path:polygon(10px_0,100%_0,calc(100%_-_10px)_100%,0_100%)]">Model</button>
      <button className="h-6 px-2">Layout1</button>
      <span className="mt-[5px]"><Slash /></span>
      <button className="h-6 px-[9px]">Layout2</button>
      <span className="mt-[5px]"><Slash /></span>
      <button aria-label="New layout" className="mx-[10px] mt-[5px]"><Plus /></button>
      <span className="mt-[5px]"><Slash /></span>

      <div className="mt-[2px] mr-[2px] ml-auto flex gap-[2px]">
        <Cell className="w-12 justify-center"><button className="text-xs">MODEL</button></Cell>
        <Cell className="w-16 justify-between px-1">
          <button aria-label="Grid"><Svg><path d="M3.500 0V15M7.500 0V15M11.500 0V15M0 3.500H15M0 7.500H15M0 11.500H15" stroke={LIGHT} /></Svg></button>
          <button aria-label="Snap"><Svg w={12} h={12}><path d="M0 0H2V2H0ZM5 0H7V2H5ZM10 0H12V2H10ZM0 5H2V7H0ZM5 5H7V7H5ZM10 5H12V7H10ZM0 10H2V12H0ZM5 10H7V12H5ZM10 10H12V12H10Z" fill={LIGHT} /></Svg></button>
          <Caret size="md" />
        </Cell>
        <Cell className="w-[104px] justify-between px-1">
          <button aria-label="Ortho"><Svg><path d="M.5 0V15.500H16M.5 10.500H5.500V15.500" stroke={LIGHT} /></Svg></button>
          <button aria-label="Polar tracking"><Svg><circle cx="7" cy="8.500" r="6" stroke={LIGHT} strokeWidth="1.2" /><path d="M7 8.500L14 1M7 8.500H16M11 5V12" stroke={LIGHT} /></Svg></button>
          <Caret size="md" />
          <button aria-label="Isometric drafting"><Svg><path d="M1 1L15 14" stroke={RED} strokeWidth="1.2" /><path d="M7.500 0V16" stroke={GREEN} strokeWidth="1.3" /><rect x="6" y="6" width="3" height="3" fill={PANEL} stroke="#fff" /></Svg></button>
          <Caret size="md" />
        </Cell>
        <Cell className="w-[63px] justify-between px-1">
          <button aria-label="Object snap tracking"><Svg><path d="M0 13.500H16M1 13L13 2" stroke={LIGHT} strokeWidth="1.2" /><rect x="5" y="6" width="3" height="3" fill="#fff" /></Svg></button>
          <button aria-label="Object snap"><Svg><path d="M6 2.500H15.500V15.500H1.500V6" stroke={LIGHT} /><rect x=".8" y=".8" width="4" height="4" stroke="#f5a56b" strokeWidth="1.4" /></Svg></button>
          <Caret size="md" />
        </Cell>
        <Cell className="w-[25px] justify-center">
          <button aria-label="Lineweight"><Svg><path d="M0 1H16V2H0ZM0 4H8V6H0ZM9 5H16V6H9ZM0 8H16V10H0ZM0 12H8V15H0ZM9 13H14V15H9Z" fill={LIGHT} /></Svg></button>
        </Cell>
        <Cell className="w-[107px] justify-between pr-1 pl-px">
          <button aria-label="Annotation visibility" className="flex h-[22px] w-[22px] items-center justify-center bg-[#5f92cc] text-white">
            <Svg>{compass}<circle cx="13" cy="3" r="2" stroke="#fff" fill="#5f92cc" /></Svg>
          </button>
          <button aria-label="Auto scale" className="text-[#d9d9d9]"><Svg>{compass}<path d="M13 0L10 4H12L11 7L15 3H13Z" fill="#fff" /></Svg></button>
          <button className="flex items-center gap-[7px] text-xs text-[#e4e4e4]"><Svg>{compass}</Svg>1:1</button>
          <Caret size="md" />
        </Cell>
        <Cell className="w-[39px] justify-between px-1">
          <button aria-label="Workspace">
            <Svg><circle cx="8" cy="8" r="4.500" stroke={LIGHT} strokeWidth="3" /><circle cx="8" cy="8" r="6.800" stroke={LIGHT} strokeWidth="2" strokeDasharray="2.7 2.64" /></Svg>
          </button>
          <Caret size="md" />
        </Cell>
        <Cell className="w-[25px] justify-center"><button aria-label="Annotation monitor"><Svg><path d="M7 0H9V7H16V9H9V16H7V9H0V7H7Z" fill={LIGHT} /></Svg></button></Cell>
        <Cell className="w-[25px] justify-center">
          <button aria-label="Isolate objects"><Svg><rect x=".5" y=".5" width="6" height="5" stroke={LIGHT} /><circle cx="12.500" cy="6" r="2.800" stroke={LIGHT} /><path d="M6.500 9.500L9.500 15.500H3.500Z" stroke={LIGHT} /></Svg></button>
        </Cell>
        <Cell className="w-[58px] justify-between px-[6px]">
          <button aria-label="Plot notification">
            <Svg><path d="M3.500 4V.5H11.500V4M1 4.500H14.500V11.500H1.500V4.500M3.500 8H11.500V14.500H3.500Z" stroke={LIGHT} /><path d="M11.500 7L16 16H7Z" fill="#f5a06a" /><path d="M11.500 10V13M11.500 14V15" stroke="#222" /></Svg>
          </button>
          <button aria-label="Trusted file">
            <Svg><path d="M1 0H10L14 4V15H1Z" fill="#2c6bb3" /><path d="M1 8H10V15H1Z" fill="#f5b921" /><path d="M0 6.500H8M5.500 1V9" stroke="#fff" /><path d="M8 12L11 15L16 10" stroke={GREEN} strokeWidth="1.8" /></Svg>
          </button>
        </Cell>
        <Cell className="w-6 justify-center">
          <button aria-label="Clean screen"><Svg><rect x=".5" y="2.500" width="15" height="11" stroke={LIGHT} /><path d="M10 4H14V8ZM6 12H2V8Z" fill={LIGHT} /></Svg></button>
        </Cell>
        <Cell className="w-6 justify-center">
          <button aria-label="Customization"><Svg><path d="M0 1H16V3H0ZM0 7H16V9H0ZM0 13H16V15H0Z" fill={LIGHT} /></Svg></button>
        </Cell>
      </div>
    </footer>
  );
}

export default function App() {
  const [tab, setTab] = useState('Home');

  return (
    <div className="flex h-screen flex-col overflow-hidden bg-[#222831] font-['Noto_Sans','Open_Sans',sans-serif] text-[11px] leading-4">
      <TitleBar />
      <RibbonTabs tab={tab} onSelect={setTab} />
      <Ribbon />
      <FileTabs />
      <Viewport />
      <div className="h-1 bg-[#3b4453]" />
      <StatusBar />
      <div className="flex h-[2px] justify-center bg-[#1b1b1b]">
        <span className="w-12 bg-[#5a5a5a]" />
      </div>
    </div>
  );
}
